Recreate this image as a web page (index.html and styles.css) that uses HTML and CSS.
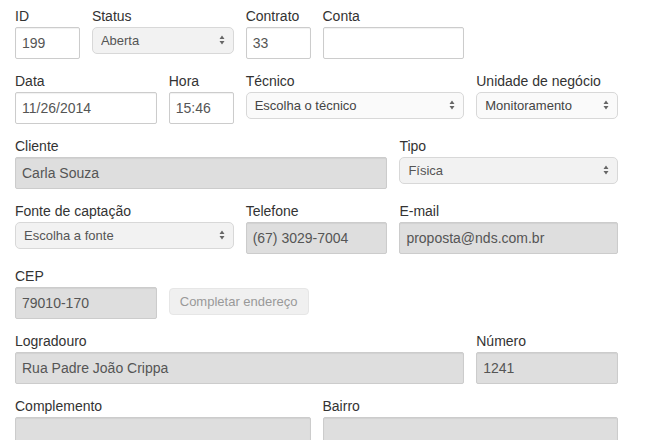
FILE: index.html
```html
<!DOCTYPE html>
<html lang="pt-BR">
<head>
  <meta charset="UTF-8" />
  <title>Ordem de serviço</title>
  <link rel="stylesheet" href="styles.css">
</head>
<body>

  <form class="formulario">

    <div class="linha">
      <div class="campo c1">
        <label>ID</label>
        <input type="text" class="caixa" value="199" />
      </div>
      <div class="campo c2">
        <label>Status</label>
        <div class="seletor inativo">
          <select disabled><option>Aberta</option></select>
          <svg class="setas" width="6" height="10" viewBox="0 0 6 10"><path d="M3 0.5L5.5 4H0.5Z M3 9.5L5.5 6H0.5Z" /></svg>
        </div>
      </div>
      <div class="campo c1">
        <label>Contrato</label>
        <input type="text" class="caixa" value="33" />
      </div>
      <div class="campo c2">
        <label>Conta</label>
        <input type="text" class="caixa" value="" />
      </div>
    </div>

    <div class="linha">
      <div class="campo c2">
        <label>Data</label>
        <input type="text" class="caixa" value="11/26/2014" />
      </div>
      <div class="campo c1">
        <label>Hora</label>
        <input type="text" class="caixa" value="15:46" />
      </div>
      <div class="campo c3">
        <label>Técnico</label>
        <div class="seletor">
          <select><option>Escolha o técnico</option></select>
          <svg class="setas" width="6" height="10" viewBox="0 0 6 10"><path d="M3 0.5L5.5 4H0.5Z M3 9.5L5.5 6H0.5Z" /></svg>
        </div>
      </div>
      <div class="campo c2">
        <label>Unidade de negócio</label>
        <div class="seletor">
          <select><option>Monitoramento</option></select>
          <svg class="setas" width="6" height="10" viewBox="0 0 6 10"><path d="M3 0.5L5.5 4H0.5Z M3 9.5L5.5 6H0.5Z" /></svg>
        </div>
      </div>
    </div>

    <div class="linha">
      <div class="campo c5">
        <label>Cliente</label>
        <input type="text" class="caixa" value="Carla Souza" disabled />
      </div>
      <div class="campo c3">
        <label>Tipo</label>
        <div class="seletor inativo">
          <select disabled><option>Física</option></select>
          <svg class="setas" width="6" height="10" viewBox="0 0 6 10"><path d="M3 0.5L5.5 4H0.5Z M3 9.5L5.5 6H0.5Z" /></svg>
        </div>
      </div>
    </div>

    <div class="linha">
      <div class="campo c3">
        <label>Fonte de captação</label>
        <div class="seletor inativo">
          <select><option>Escolha a fonte</option></select>
          <svg class="setas" width="6" height="10" viewBox="0 0 6 10"><path d="M3 0.5L5.5 4H0.5Z M3 9.5L5.5 6H0.5Z" /></svg>
        </div>
      </div>
      <div class="campo c2">
        <label>Telefone</label>
        <input type="text" class="caixa" value="(67) 3029-7004" disabled />
      </div>
      <div class="campo c3">
        <label>E-mail</label>
        <input type="text" class="caixa" value="proposta@nds.com.br" disabled />
      </div>
    </div>

    <div class="linha">
      <div class="campo c2">
        <label>CEP</label>
        <input type="text" class="caixa" value="79010-170" disabled />
      </div>
      <div class="campo c2">
        <button type="button" class="botao" disabled>Completar endereço</button>
      </div>
    </div>

    <div class="linha">
      <div class="campo c6">
        <label>Logradouro</label>
        <input type="text" class="caixa" value="Rua Padre João Crippa" disabled />
      </div>
      <div class="campo c2">
        <label>Número</label>
        <input type="text" class="caixa" value="1241" disabled />
      </div>
    </div>

    <div class="linha">
      <div class="campo c4">
        <label>Complemento</label>
        <input type="text" class="caixa" value="" disabled />
      </div>
      <div class="campo c4">
        <label>Bairro</label>
        <input type="text" class="caixa" value="" disabled />
      </div>
    </div>

  </form>

</body>
</html>
```

FILE: styles.css
```css
body {
  font-family: "Liberation Sans", Arial, sans-serif;
  font-size: 14px;
  color: #333;
  margin: 0;
  background-color: #fff;
}

.formulario {
  width: 603px;
  padding: 6px 15px 0;
}

.linha {
  display: grid;
  grid-template-columns: repeat(8, 1fr);
  column-gap: 12px;
  margin-bottom: 12px;
}

.c1 { grid-column: span 1; }
.c2 { grid-column: span 2; }
.c3 { grid-column: span 3; }
.c4 { grid-column: span 4; }
.c5 { grid-column: span 5; }
.c6 { grid-column: span 6; }

.campo label {
  display: block;
  line-height: 20px;
  margin-bottom: 1px;
}

.caixa {
  box-sizing: border-box;
  display: block;
  width: 100%;
  height: 32px;
  padding: 0 6px;
  font-family: inherit;
  font-size: 14px;
  color: #555;
  background-color: #fff;
  border: 1px solid #ccc;
  border-radius: 2px;
  box-shadow: inset 0 1px 1px rgba(0, 0, 0, 0.06);
}

.caixa:disabled {
  background-color: #dedede;
  color: #555;
  -webkit-text-fill-color: #555;
  opacity: 1;
}

.seletor {
  position: relative;
  height: 27px;
}

.seletor select {
  box-sizing: border-box;
  width: 100%;
  height: 27px;
  padding: 0 8px;
  -webkit-appearance: none;
  appearance: none;
  font-family: inherit;
  font-size: 13px;
  color: #444;
  background-color: #fafafa;
  border: 1px solid #d8d8d8;
  border-radius: 5px;
}

.seletor.inativo select {
  background-color: #f2f2f2;
  color: #555;
  opacity: 1;
}

.setas {
  position: absolute;
  right: 9px;
  top: 8px;
  fill: #666;
  pointer-events: none;
}

.botao {
  margin-top: 22px;
  height: 27px;
  padding: 0 10px;
  font-family: inherit;
  font-size: 13px;
  color: #999;
  background-color: #f0f0f0;
  border: 1px solid #e6e6e6;
  border-radius: 4px;
}
```
